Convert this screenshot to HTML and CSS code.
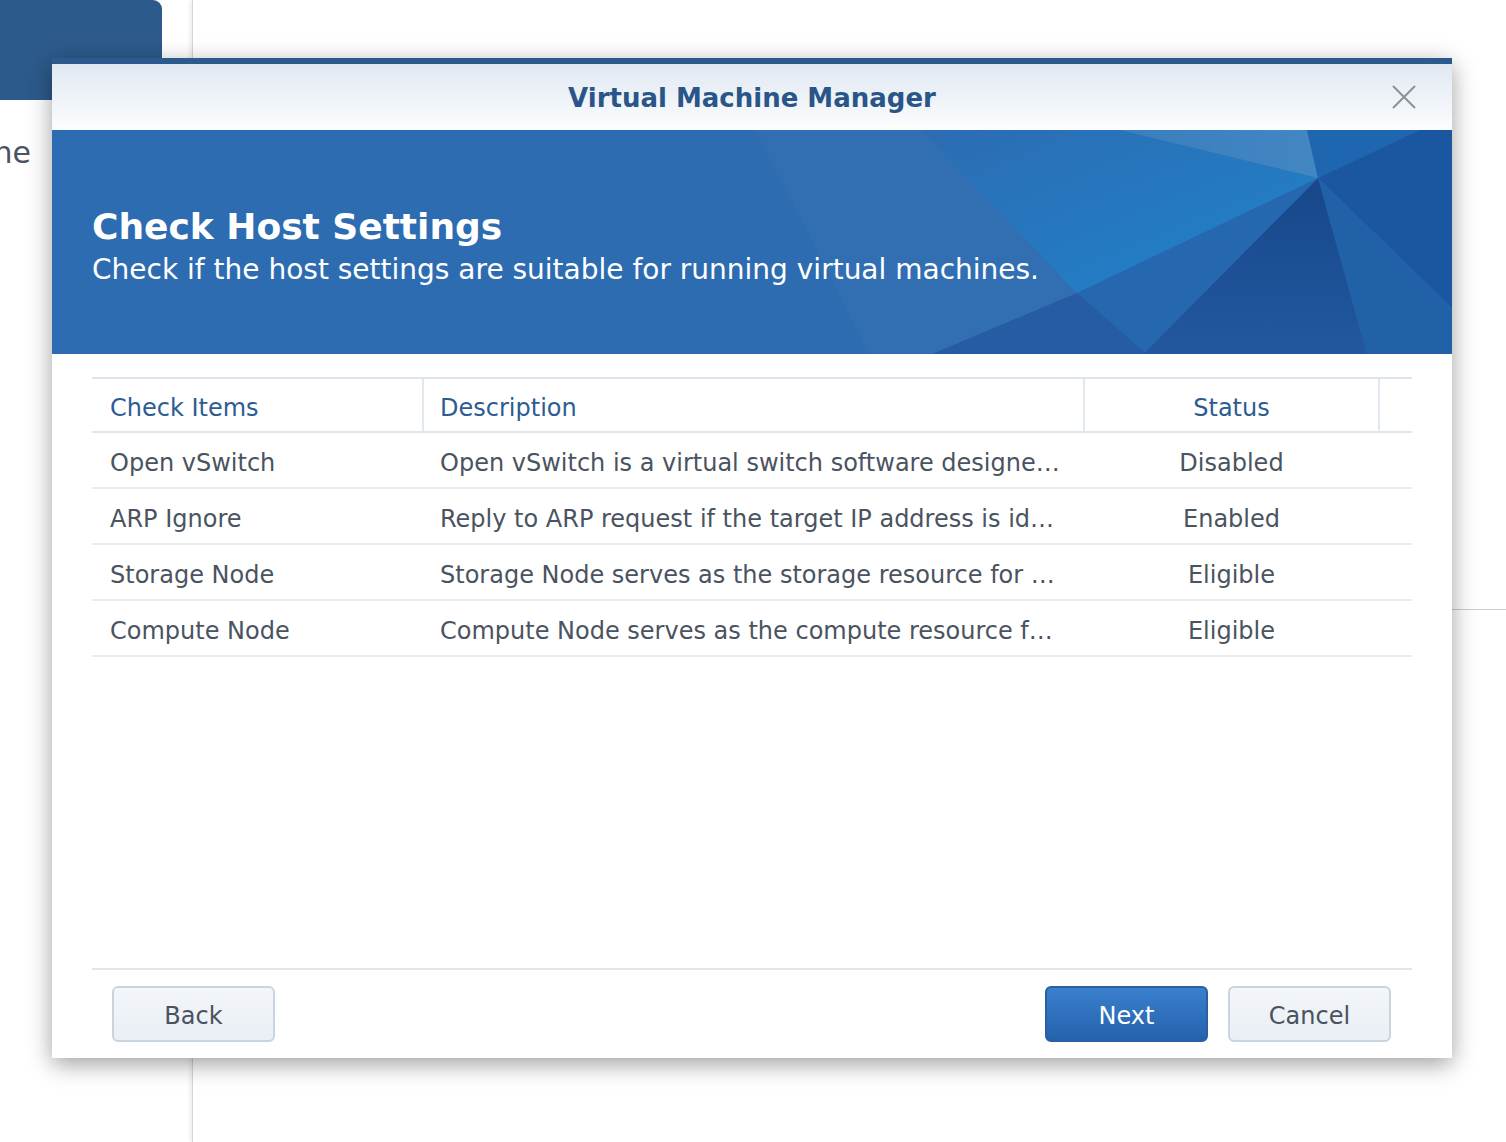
FILE: index.html
```html
<!DOCTYPE html>
<html lang="en">
<head>
<meta charset="utf-8">
<title>Virtual Machine Manager</title>
<link rel="stylesheet" href="styles.css">
</head>
<body>
<div class="page">
  <aside class="sidebar">
    <div class="sidebar-tab"></div>
    <div class="sidebar-label"><span>Virtual Machine</span></div>
  </aside>
  <main class="backwin">
    <div class="backwin-top"></div>
  </main>

  <section class="dialog">
    <header class="dialog-head">
      <h1 class="dialog-title">Virtual Machine Manager</h1>
      <button class="close" aria-label="Close">
        <svg width="24" height="24" viewBox="0 0 24 24"><path d="M1 1 L23 23 M23 1 L1 23" stroke="#8c9197" stroke-width="2" fill="none"/></svg>
      </button>
    </header>

    <div class="banner">
      <svg class="banner-art" viewBox="0 0 1400 224" preserveAspectRatio="none" aria-hidden="true">
        <defs>
          <linearGradient id="g1" x1="0" y1="0" x2="1" y2="1">
            <stop offset="0" stop-color="#2c6cb3"/>
            <stop offset="1" stop-color="#1f84cb"/>
          </linearGradient>
          <linearGradient id="g2" x1="0" y1="0" x2="0" y2="1">
            <stop offset="0" stop-color="#17478a"/>
            <stop offset="1" stop-color="#23589f"/>
          </linearGradient>
          <linearGradient id="g3" x1="0" y1="0" x2="1" y2="0">
            <stop offset="0" stop-color="#3a7ebd"/>
            <stop offset="1" stop-color="#4287c2"/>
          </linearGradient>
        </defs>
        <polygon points="703,0 1400,0 1400,224 818,224" fill="#ffffff" opacity="0.025"/>
        <polygon points="869,0 1068,0 1266,48 1025,163" fill="url(#g1)"/>
        <polygon points="1068,0 1255,0 1266,48" fill="url(#g3)"/>
        <polygon points="1255,0 1368,0 1266,48" fill="#1f66b0"/>
        <polygon points="1368,0 1400,0 1400,178 1266,48" fill="#1b57a0"/>
        <polygon points="1266,48 1400,178 1400,224 1315,224" fill="#2161a8"/>
        <polygon points="1266,48 1315,224 1091,224" fill="url(#g2)"/>
        <polygon points="1266,48 1091,224 1025,163" fill="#2568b0"/>
        <polygon points="1025,163 1095,224 880,224" fill="#255ca3"/>
      </svg>
      <h2 class="banner-title">Check Host Settings</h2>
      <p class="banner-sub">Check if the host settings are suitable for running virtual machines.</p>
    </div>

    <div class="dialog-body">
      <div class="grid">
        <div class="row head">
          <div class="cell c1">Check Items</div>
          <div class="cell c2">Description</div>
          <div class="cell c3">Status</div>
          <div class="cell c4"></div>
        </div>
        <div class="row">
          <div class="cell c1">Open vSwitch</div>
          <div class="cell c2">Open vSwitch is a virtual switch software designe…</div>
          <div class="cell c3">Disabled</div>
          <div class="cell c4"></div>
        </div>
        <div class="row">
          <div class="cell c1">ARP Ignore</div>
          <div class="cell c2">Reply to ARP request if the target IP address is id…</div>
          <div class="cell c3">Enabled</div>
          <div class="cell c4"></div>
        </div>
        <div class="row">
          <div class="cell c1">Storage Node</div>
          <div class="cell c2">Storage Node serves as the storage resource for …</div>
          <div class="cell c3">Eligible</div>
          <div class="cell c4"></div>
        </div>
        <div class="row">
          <div class="cell c1">Compute Node</div>
          <div class="cell c2">Compute Node serves as the compute resource f…</div>
          <div class="cell c3">Eligible</div>
          <div class="cell c4"></div>
        </div>
      </div>
    </div>

    <footer class="dialog-foot">
      <button class="btn">Back</button>
      <div class="spacer"></div>
      <button class="btn btn-primary">Next</button>
      <button class="btn">Cancel</button>
    </footer>
  </section>
</div>
</body>
</html>
```

FILE: styles.css
```css
* { box-sizing: border-box; }

html, body {
  margin: 0;
  padding: 0;
  background: #ffffff;
  font-family: "DejaVu Sans", Verdana, sans-serif;
}

.page {
  position: relative;
  width: 1506px;
  height: 1142px;
  overflow: hidden;
  display: grid;
  grid-template-columns: 192px 1fr;
}

/* background app */
.sidebar {
  display: flex;
  flex-direction: column;
}

.sidebar-tab {
  width: 162px;
  height: 100px;
  background: #2c5a8b;
  border-radius: 0 9px 9px 0;
}

.sidebar-label {
  margin-top: 36px;
  width: 31px;
  display: flex;
  justify-content: flex-end;
  overflow: hidden;
  white-space: nowrap;
  font-size: 30px;
  line-height: 34px;
  color: #4a5260;
}

.backwin {
  border-left: 1px solid #d6d6d6;
  box-shadow: -2px 0 4px rgba(0, 0, 0, 0.08);
}

.backwin-top {
  height: 610px;
  border-bottom: 1px solid #cdcdcd;
}

/* dialog */
.dialog {
  position: absolute;
  left: 52px;
  top: 58px;
  width: 1400px;
  height: 1000px;
  background: #ffffff;
  border-top: 6px solid #2c5a8c;
  box-shadow: 0 6px 22px rgba(0, 0, 0, 0.38);
  display: flex;
  flex-direction: column;
}

.dialog-head {
  position: relative;
  height: 66px;
  background: linear-gradient(#e0e8f1, #fcfdfe);
  display: flex;
  align-items: center;
  justify-content: center;
}

.dialog-title {
  margin: 0;
  padding-top: 2px;
  font-size: 26px;
  line-height: 64px;
  font-weight: bold;
  color: #2a5588;
}

.close {
  position: absolute;
  right: 36px;
  top: 21px;
  width: 24px;
  height: 24px;
  padding: 0;
  border: 0;
  background: transparent;
  display: flex;
}

.banner {
  position: relative;
  height: 224px;
  background: #2d6cb1;
  padding: 75px 40px 0 40px;
  overflow: hidden;
  color: #ffffff;
}

.banner-art {
  position: absolute;
  left: 0;
  top: 0;
  width: 100%;
  height: 100%;
}

.banner-title {
  position: relative;
  margin: 0;
  font-size: 36px;
  line-height: 44px;
  font-weight: bold;
}

.banner-sub {
  position: relative;
  margin: 4px 0 0 0;
  font-size: 28px;
  line-height: 34px;
}

.dialog-body {
  flex: 1;
  padding: 23px 40px 0 40px;
}

.grid {
  display: flex;
  flex-direction: column;
}

.row {
  display: grid;
  grid-template-columns: 330px 661px 295px 1fr;
  height: 56px;
  border-bottom: 2px solid #e9ecef;
  font-size: 24px;
  color: #4a5360;
}

.row.head {
  border-top: 2px solid #dce4ee;
  border-bottom: 2px solid #dfe6ee;
  color: #2d5c93;
}

.cell {
  display: flex;
  align-items: center;
  padding: 6px 16px 0 16px;
  white-space: nowrap;
  overflow: hidden;
}

.cell.c1 { padding-left: 18px; }
.cell.c3 { justify-content: center; }

.row.head .c2,
.row.head .c3,
.row.head .c4 {
  border-left: 2px solid #e1e8f0;
}

.row:not(.head) .c2,
.row:not(.head) .c3 {
  padding-left: 18px;
}

.dialog-foot {
  margin: 0 40px;
  border-top: 2px solid #e3e5e8;
  padding: 16px 21px 16px 20px;
  display: flex;
  gap: 20px;
}

.spacer { flex: 1; }

.btn {
  width: 163px;
  height: 56px;
  border: 2px solid #c9d4df;
  border-radius: 6px;
  background: linear-gradient(#f3f6fa, #e9eff5);
  font-family: "DejaVu Sans", Verdana, sans-serif;
  font-size: 24px;
  color: #4a5260;
  padding: 4px 0 0 0;
}

.btn-primary {
  border-color: #2a5fa3;
  background: linear-gradient(#3a80cd, #2462ad);
  color: #ffffff;
}
```
